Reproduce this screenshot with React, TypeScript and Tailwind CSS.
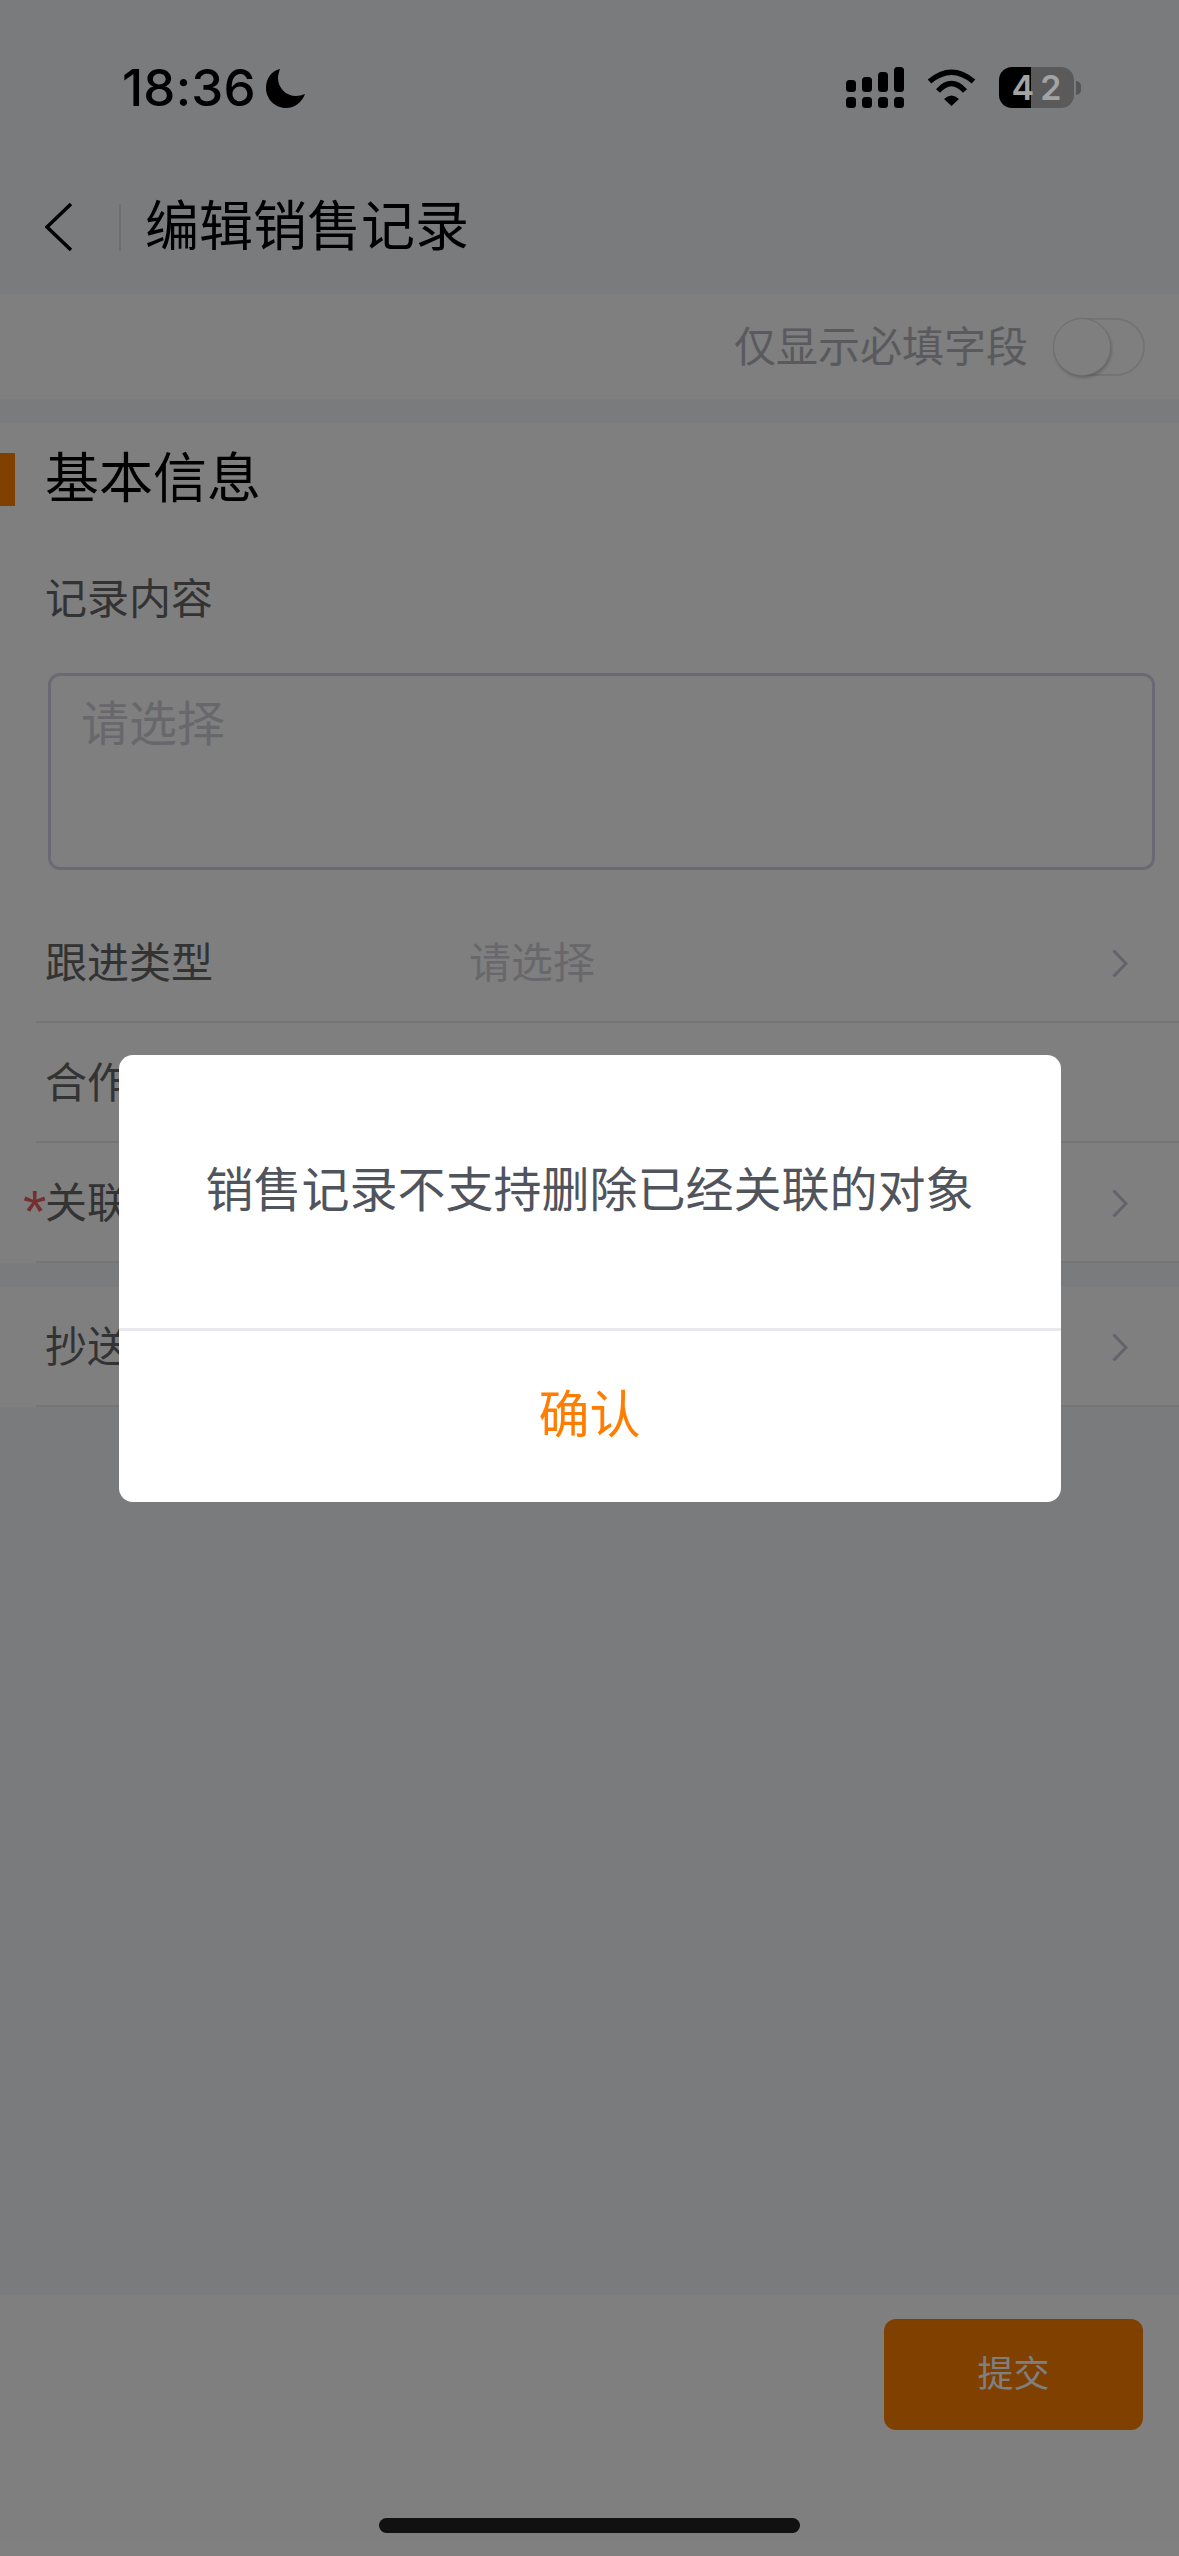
const cjk = "font-['Liberation_Sans','Noto_Sans_CJK_SC',sans-serif]";

function SignalIcon() {
  return (
    <svg width="58" height="41" viewBox="0 0 58 41" fill="#000">
      <rect x="0" y="13" width="10" height="12" rx="3.5" />
      <rect x="16" y="10" width="10" height="15" rx="3.5" />
      <rect x="32" y="5" width="10" height="20" rx="3.5" />
      <rect x="48" y="0" width="10" height="25" rx="3.5" />
      <rect x="0" y="30" width="10" height="11" rx="3.5" />
      <rect x="16" y="30" width="10" height="11" rx="3.5" />
      <rect x="32" y="30" width="10" height="11" rx="3.5" />
      <rect x="48" y="30" width="10" height="11" rx="3.5" />
    </svg>
  );
}

function WifiIcon() {
  return (
    <svg width="51" height="37" viewBox="0 0 51 37" fill="none">
      <path d="M3.5 12.5Q25.5 -6 47.5 12.5" stroke="#000" strokeWidth="5.5" />
      <path d="M12 22Q25.5 7 39 22" stroke="#000" strokeWidth="5.5" />
      <path d="M18 30Q25.5 23 33 30L25.5 37Z" fill="#000" />
    </svg>
  );
}

function MoonIcon() {
  return (
    <svg width="39" height="39" viewBox="0 0 39 39" fill="#000">
      <path d="M14 0C5 2 0 10 0 19C0 30 9 39 20 39C29 39 36 33 39 25C36 26 33 27 30 27C20 27 12 19 12 9C12 6 13 3 14 0Z" />
    </svg>
  );
}

function Chevron() {
  return (
    <svg width="16" height="27" viewBox="0 0 16 27" fill="none" className="shrink-0">
      <path d="M1.5 0.5L14 13.5L1.5 26.5" stroke="#c4c6d6" strokeWidth="3" />
    </svg>
  );
}

function StatusBar() {
  return (
    <div className="relative z-10 flex h-[160px] shrink-0 items-start pl-[122px] pt-[67px]">
      <span className="font-['Inter',sans-serif] text-[51px] leading-[41px] font-medium tracking-[0.2px] text-black">18:36</span>
      <span className="ml-[10px] mt-[2px]"><MoonIcon /></span>
      <div className="ml-auto flex items-start pr-[98px]">
        <SignalIcon />
        <span className="ml-[22px] mt-[2px]"><WifiIcon /></span>
        <div className="ml-[22px] flex h-[41px] w-[75px] items-center justify-center gap-[6px] rounded-[13px] bg-[linear-gradient(90deg,#000_43%,#5a5a5a_43%)] font-['Inter',sans-serif] text-[34px] font-semibold text-[#a3a3a3]">
          <span>4</span>
          <span>2</span>
        </div>
        <div className="ml-[2px] mt-[14px] h-[14px] w-[5px] rounded-r-full bg-[#555]" />
      </div>
    </div>
  );
}

function FormRow({ label, value, required, arrow = true }: { label: string; value?: string; required?: boolean; arrow?: boolean }) {
  return (
    <div className="ml-[36px] flex h-[120px] items-center border-b-2 border-[#eaeaea] pl-[9px] pr-[51px] pt-[2px] text-[42px]">
      <span className="relative w-[424px] shrink-0 text-[#666]">
        {required && <span className="absolute left-[-22px] top-[10px] text-[60px] leading-none text-[#e86060]">*</span>}
        {label}
      </span>
      {value && <span className="text-[#d0d0d8]">{value}</span>}
      {arrow && <span className="ml-auto"><Chevron /></span>}
    </div>
  );
}

export default function App() {
  return (
    <div className={`relative flex h-[2556px] w-[1179px] flex-col overflow-hidden bg-[#f4f6fa] ${cjk}`}>
      <StatusBar />

      <div className="flex h-[134px] shrink-0 items-center pl-[45px]">
        <svg width="28" height="48" viewBox="0 0 28 48" fill="none" className="shrink-0">
          <path d="M26 1L2 24L26 47" stroke="#000" strokeWidth="3.5" />
        </svg>
        <div className="ml-[46px] h-[47px] w-[2px] bg-[#dfdfdf]" />
        <h1 className="ml-[24px] text-[54px] font-normal text-black">编辑销售记录</h1>
      </div>

      <div className="flex h-[105px] shrink-0 items-center justify-end bg-white pr-[34px]">
        <span className="mt-[2px] text-[42px] text-[#b4b4bc]">仅显示必填字段</span>
        <div className="ml-[25px] flex h-[58px] w-[92px] items-center rounded-full border-2 border-[#e8e8e8]">
          <div className="ml-[-2px] h-[58px] w-[58px] rounded-full border border-[#ddd] bg-white shadow-[1px_2px_3px_rgba(0,0,0,0.2)]" />
        </div>
      </div>

      <div className="mt-[24px] shrink-0 bg-white pt-[30px]">
        <div className="flex h-[53px] items-center">
          <div className="h-[53px] w-[15px] bg-[#ff8000]" />
          <h2 className="ml-[30px] text-[54px] font-normal text-black">基本信息</h2>
        </div>
        <div className="mt-[72px] flex h-[42px] items-center pl-[45px] text-[42px] text-[#666]">记录内容</div>
        <div className="ml-[48px] mr-[24px] mt-[53px] h-[197px] rounded-[12px] border-[3px] border-[#d4d4e4] pl-[30px] pt-[17px] text-[48px] leading-[64px] text-[#d0d0d8]">请选择</div>
        <div className="mt-[33px]">
          <FormRow label="跟进类型" value="请选择" />
          <FormRow label="合作伙伴" arrow={false} />
          <FormRow label="关联对象" required />
        </div>
      </div>

      <div className="mt-[24px] shrink-0 bg-white">
        <FormRow label="抄送人" />
      </div>

      <div className="mt-auto flex h-[261px] shrink-0 flex-col bg-white pt-[24px]">
        <button className="ml-auto mr-[36px] h-[111px] w-[259px] rounded-[12px] bg-[#ff8000] text-[36px] text-white">提交</button>
        <div className="mx-auto mt-[88px] h-[15px] w-[421px] rounded-full bg-[#222]" />
      </div>

      <div className="absolute inset-0 flex items-center justify-center bg-black/50">
        <div className="flex h-[447px] w-[942px] flex-col rounded-[14px] bg-white">
          <div className="flex h-[273px] items-center justify-center text-[48px] text-[#50545c]">销售记录不支持删除已经关联的对象</div>
          <div className="h-[3px] bg-[#e8e8ee]" />
          <div className="flex flex-1 items-center justify-center text-[51px] text-[#ff7d00]">确认</div>
        </div>
      </div>
    </div>
  );
}
